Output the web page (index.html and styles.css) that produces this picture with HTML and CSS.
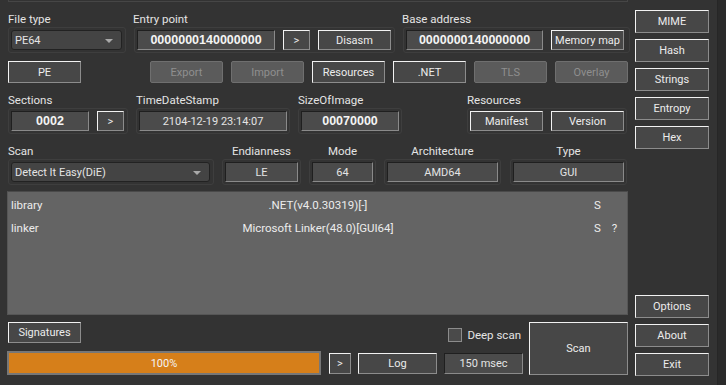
FILE: index.html
```html
<!DOCTYPE html>
<html lang="en">
<head>
    <meta charset="UTF-8">
    <title>Detect It Easy</title>
    <link rel="stylesheet" href="styles.css">
</head>
<body>
    <div class="main">
        <div class="topline"></div>

        <div class="row row-first">
            <div class="group g-filetype">
                <div class="label">File type</div>
                <div class="frame">
                    <div class="combo w-type">PE64<span class="arrow"></span></div>
                </div>
            </div>
            <div class="group g-entry">
                <div class="label">Entry point</div>
                <div class="frame">
                    <div class="field bold w-addr">0000000140000000</div>
                    <div class="btn w-small">&gt;</div>
                    <div class="btn w-btn">Disasm</div>
                </div>
            </div>
            <div class="group g-base">
                <div class="label">Base address</div>
                <div class="frame">
                    <div class="field bold w-addr2">0000000140000000</div>
                    <div class="btn w-btn">Memory map</div>
                </div>
            </div>
        </div>

        <div class="row row-buttons">
            <div class="btn w-btn">PE</div>
            <div class="btn w-btn disabled first-tool">Export</div>
            <div class="btn w-btn disabled">Import</div>
            <div class="btn w-btn">Resources</div>
            <div class="btn w-btn">.NET</div>
            <div class="btn w-btn disabled">TLS</div>
            <div class="btn w-btn disabled">Overlay</div>
        </div>

        <div class="row row-info">
            <div class="group g-sections">
                <div class="label">Sections</div>
                <div class="frame">
                    <div class="field bold w-sections">0002</div>
                    <div class="btn w-small">&gt;</div>
                </div>
            </div>
            <div class="group g-time">
                <div class="label">TimeDateStamp</div>
                <div class="frame">
                    <div class="field w-time">2104-12-19 23:14:07</div>
                </div>
            </div>
            <div class="group g-size">
                <div class="label">SizeOfImage</div>
                <div class="frame">
                    <div class="field bold w-size">00070000</div>
                </div>
            </div>
            <div class="group g-res">
                <div class="label">Resources</div>
                <div class="frame">
                    <div class="btn w-btn">Manifest</div>
                    <div class="btn w-btn">Version</div>
                </div>
            </div>
        </div>

        <div class="row row-scan">
            <div class="group g-scan">
                <div class="label">Scan</div>
                <div class="frame">
                    <div class="combo w-scan">Detect It Easy(DiE)<span class="arrow"></span></div>
                </div>
            </div>
            <div class="group g-endian centered">
                <div class="label">Endianness</div>
                <div class="frame">
                    <div class="field w-le">LE</div>
                </div>
            </div>
            <div class="group g-mode centered">
                <div class="label">Mode</div>
                <div class="frame">
                    <div class="field w-mode">64</div>
                </div>
            </div>
            <div class="group g-arch centered">
                <div class="label">Architecture</div>
                <div class="frame">
                    <div class="field w-arch">AMD64</div>
                </div>
            </div>
            <div class="group g-kind centered">
                <div class="label">Type</div>
                <div class="frame">
                    <div class="field w-arch">GUI</div>
                </div>
            </div>
        </div>

        <div class="results">
            <div class="result-row">
                <span class="r-name">library</span>
                <span class="r-info">.NET(v4.0.30319)[-]</span>
                <span class="r-flags"><span>S</span></span>
            </div>
            <div class="result-row">
                <span class="r-name">linker</span>
                <span class="r-info">Microsoft Linker(48.0)[GUI64]</span>
                <span class="r-flags"><span>S</span><span>?</span></span>
            </div>
        </div>

        <div class="bottom">
            <div class="bottom-left">
                <div class="bottom-top">
                    <div class="btn w-btn sig">Signatures</div>
                    <label class="deep">
                        <span class="check"></span>
                        Deep scan
                    </label>
                </div>
                <div class="bottom-bar">
                    <div class="progress"><div class="progress-fill">100%</div></div>
                    <div class="btn w-arrow">&gt;</div>
                    <div class="btn w-log">Log</div>
                    <div class="field w-log">150 msec</div>
                </div>
            </div>
            <div class="btn scan">Scan</div>
        </div>
    </div>

    <div class="side">
        <div class="btn side-btn">MIME</div>
        <div class="btn side-btn">Hash</div>
        <div class="btn side-btn">Strings</div>
        <div class="btn side-btn">Entropy</div>
        <div class="btn side-btn">Hex</div>
        <div class="spacer"></div>
        <div class="btn side-btn">Options</div>
        <div class="btn side-btn">About</div>
        <div class="btn side-btn">Exit</div>
    </div>

    <div class="strip"></div>
</body>
</html>
```

FILE: styles.css
```css
* {
    box-sizing: border-box;
}
body {
    margin: 0;
    width: 726px;
    height: 385px;
    overflow: hidden;
    display: flex;
    background: #333333;
    color: #e4e4e4;
    font-family: Roboto, "Liberation Sans", sans-serif;
    font-size: 11px;
}
.main {
    width: 631px;
    padding-left: 7px;
    display: flex;
    flex-direction: column;
}
.side {
    width: 86px;
    padding: 10px 0 9px 4px;
    display: flex;
    flex-direction: column;
    gap: 6px;
}
.side .spacer {
    flex: 1;
}
.strip {
    width: 9px;
    background: #2a2a2a;
    border-left: 1px solid #262626;
}
.topline {
    height: 2px;
    margin: 0 3px 0 1px;
    border: 1px solid #464646;
    border-top: none;
}

/* rows */
.row {
    display: flex;
}
.row-first {
    margin-top: 10px;
}
.row-buttons {
    margin-top: 8px;
    padding-left: 1px;
    gap: 8px;
}
.row-buttons .first-tool {
    margin-left: 61px;
}
.row-info,
.row-scan {
    margin-top: 10px;
}

/* groups */
.group {
    display: flex;
    flex-direction: column;
}
.label {
    height: 15px;
    line-height: 15px;
    font-size: 11.5px;
    white-space: nowrap;
}
.group.centered .label {
    text-align: center;
}
.frame {
    display: flex;
    gap: 8px;
    padding: 2px;
    border: 1px solid #3e3e3e;
    border-radius: 3px;
}
.g-filetype { margin-left: 1px; width: 118px; }
.g-entry { margin-left: 8px; width: 261px; }
.g-base { margin-left: 8px; width: 227px; }
.g-sections { margin-left: 1px; width: 120px; }
.g-time { margin-left: 8px; width: 154px; }
.g-size { margin-left: 8px; width: 104px; }
.g-res { margin-left: 65px; width: 160px; }
.g-scan { margin-left: 1px; width: 206px; }
.g-endian { margin-left: 8px; width: 79px; }
.g-mode { margin-left: 8px; width: 67px; }
.g-arch { margin-left: 8px; width: 117px; }
.g-kind { margin-left: 9px; width: 117px; }
.g-entry .label,
.g-base .label { margin-left: -1px; }

/* controls */
.btn,
.field,
.combo {
    height: 20px;
    display: flex;
    align-items: center;
    justify-content: center;
    white-space: nowrap;
}
.btn {
    height: 22px;
    background: #474747;
    border: 1px solid;
    border-color: #f2f2f2 #8c8c8c #8c8c8c #f2f2f2;
    color: #ececec;
}
.frame .btn {
    height: 20px;
}
.btn.disabled {
    background: #5b5b5b;
    border-color: #6f6f6f;
    border-radius: 2px;
    color: #8f8f8f;
}
.field {
    background: #4b4b4b;
    border: 1px solid;
    border-color: #1f1f1f #8a8a8a #8a8a8a #1f1f1f;
}
.field.bold {
    font-family: "Liberation Sans", Arial, sans-serif;
    font-weight: bold;
    font-size: 12.5px;
    color: #f4f4f4;
}
.combo {
    position: relative;
    justify-content: flex-start;
    padding-left: 3px;
    background: #444444;
    border: 1px solid #222222;
    border-radius: 3px;
}
.combo .arrow {
    position: absolute;
    right: 8px;
    top: 8px;
    border-left: 4px solid transparent;
    border-right: 4px solid transparent;
    border-top: 4px solid #a9a9a9;
}
.w-type { width: 111px; }
.w-scan { width: 199px; }
.w-addr { width: 138px; }
.w-addr2 { width: 137px; }
.w-small { width: 27px; }
.w-btn { width: 73px; }
.w-sections { width: 78px; }
.w-time { width: 148px; }
.w-size { width: 98px; }
.w-le { width: 73px; }
.w-mode { width: 63px; }
.w-arch { width: 113px; }

/* results */
.results {
    margin-top: 6px;
    width: 621px;
    height: 124px;
    padding: 1px 2px 0 3px;
    background: #646464;
    border: 1px solid #565656;
    border-top-color: #4a4a4a;
}
.result-row {
    display: grid;
    grid-template-columns: 80px 1fr 80px;
    height: 23px;
    align-items: center;
    color: #ececec;
    font-size: 11.5px;
}
.r-info {
    text-align: center;
}
.r-flags {
    display: flex;
    gap: 11px;
    padding-left: 49px;
}

/* bottom */
.bottom {
    margin-top: 7px;
    display: flex;
}
.bottom-left {
    width: 522px;
    display: flex;
    flex-direction: column;
}
.bottom-top {
    height: 21px;
    display: flex;
    align-items: center;
}
.sig {
    margin-left: 1px;
    height: 21px;
}
.deep {
    margin-left: auto;
    display: flex;
    align-items: center;
    gap: 5px;
    margin-top: 4px;
    margin-right: 8px;
    font-size: 11.5px;
}
.check {
    width: 14px;
    height: 14px;
    background: #4a4a4a;
    border: 1px solid #8c8c8c;
}
.bottom-bar {
    margin-top: 8px;
    display: flex;
    align-items: center;
    height: 24px;
}
.progress {
    width: 314px;
    height: 24px;
    border: 2px solid #777777;
    background: #777777;
}
.progress-fill {
    height: 100%;
    background: #d67f1a;
    color: #f4f4f4;
    display: flex;
    align-items: center;
    justify-content: center;
}
.w-arrow {
    width: 22px;
    margin-left: 8px;
    height: 21px;
}
.w-log {
    width: 79px;
    margin-left: 7px;
    height: 21px;
}
.scan {
    width: 99px;
    height: 53px;
}
.side-btn {
    width: 74px;
    height: 23px;
}
```
